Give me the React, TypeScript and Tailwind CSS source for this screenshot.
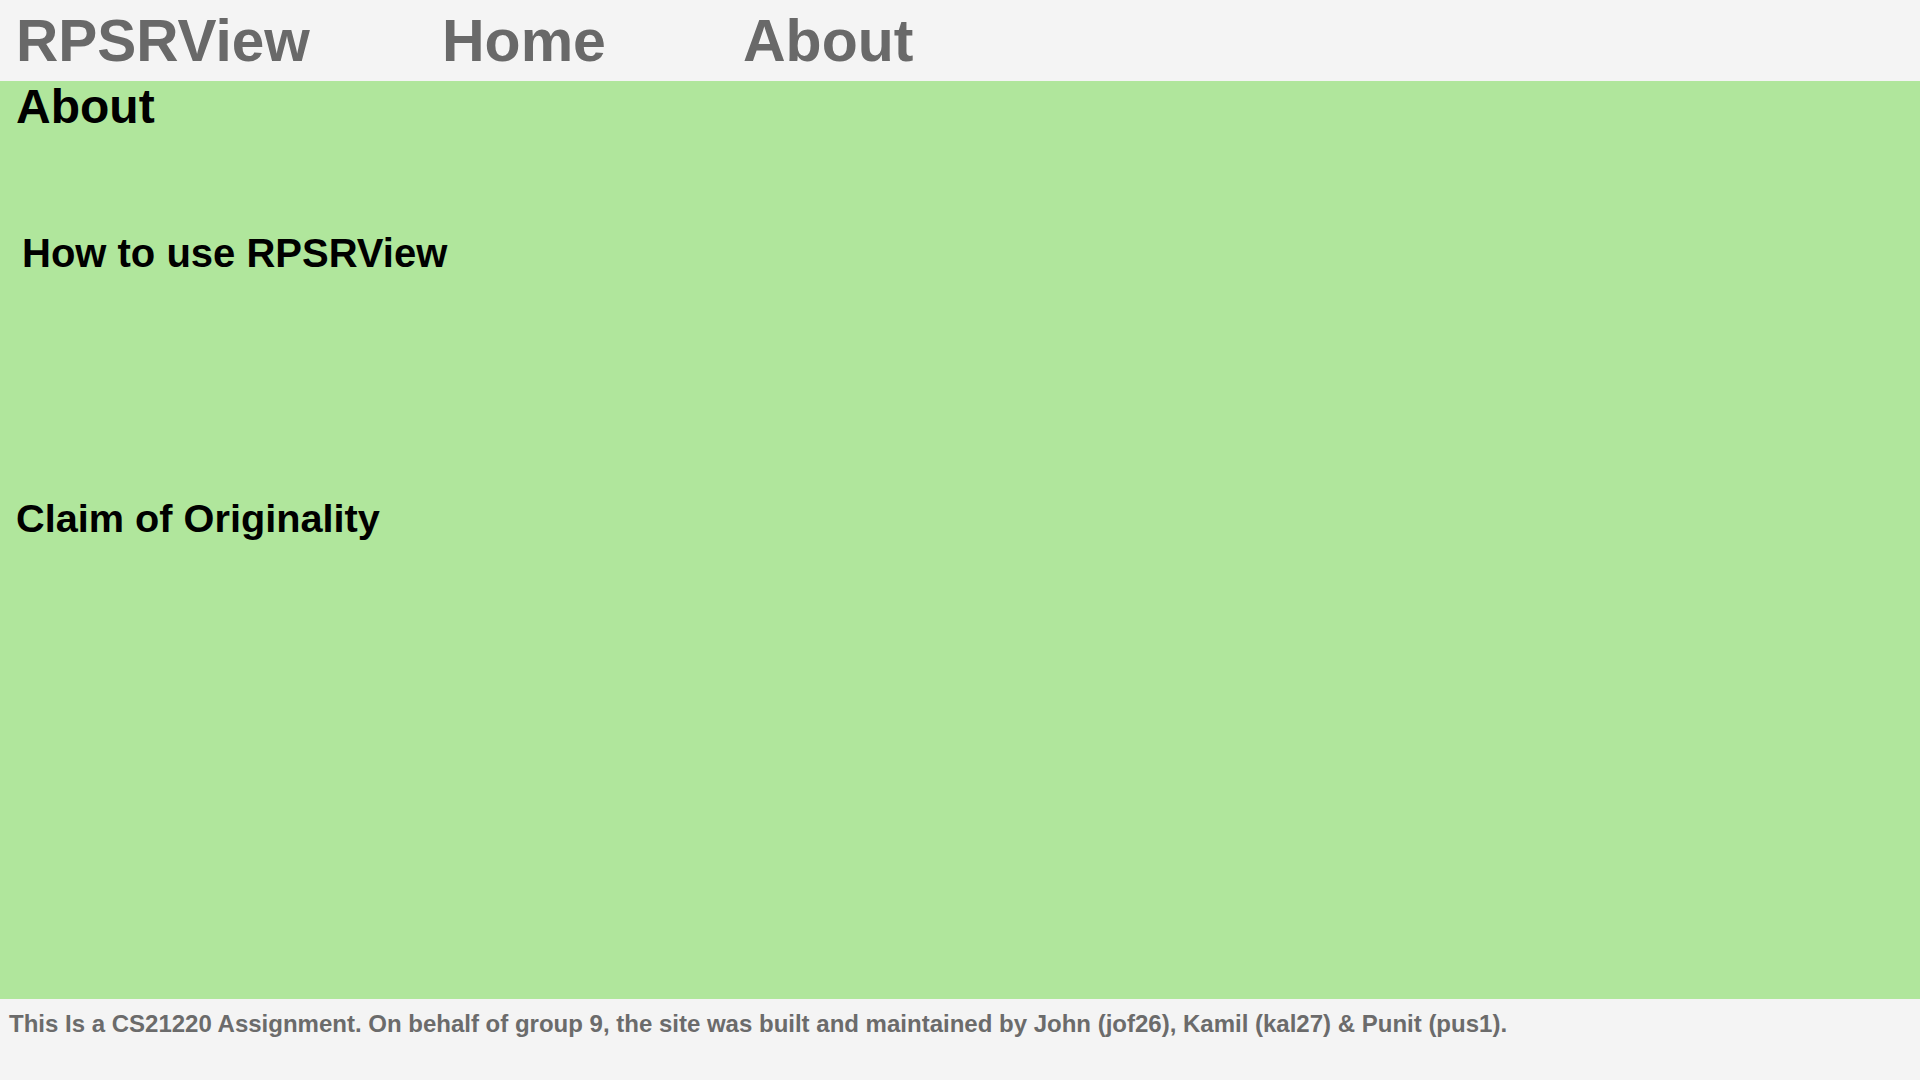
import React from "react";

export default function App() {
  return (
    <div
      className="flex h-[1080px] w-[1920px] flex-col overflow-hidden"
      style={{ fontFamily: '"Liberation Sans", Arial, sans-serif' }}
    >
      <header className="flex h-[81px] shrink-0 items-start bg-[#f4f4f4] pt-[12px] pl-[16px]">
        <nav className="flex items-start font-bold text-[59px] leading-none text-[#696969]">
          <a className="w-[426px] text-[58.5px]">RPSRView</a>
          <a className="w-[301px]">Home</a>
          <a>About</a>
        </nav>
      </header>
      <main className="flex h-[918px] shrink-0 flex-col bg-[#b0e69c] text-black">
        <h1 className="mt-[2px] pl-[16px] text-[48px] font-bold leading-none">About</h1>
        <h2 className="mt-[102px] pl-[22px] text-[40px] font-bold leading-none">How to use RPSRView</h2>
        <h2 className="mt-[226px] pl-[16px] text-[39.7px] font-bold leading-none">Claim of Originality</h2>
      </main>
      <footer className="flex-1 bg-[#f4f4f4] pt-[13px] pl-[9px]">
        <p className="text-[24px] font-bold leading-none text-[#6b6b6b]">
          This Is a CS21220 Assignment. On behalf of group 9, the site was built and maintained by John (jof26), Kamil (kal27) &amp; Punit (pus1).
        </p>
      </footer>
    </div>
  );
}
